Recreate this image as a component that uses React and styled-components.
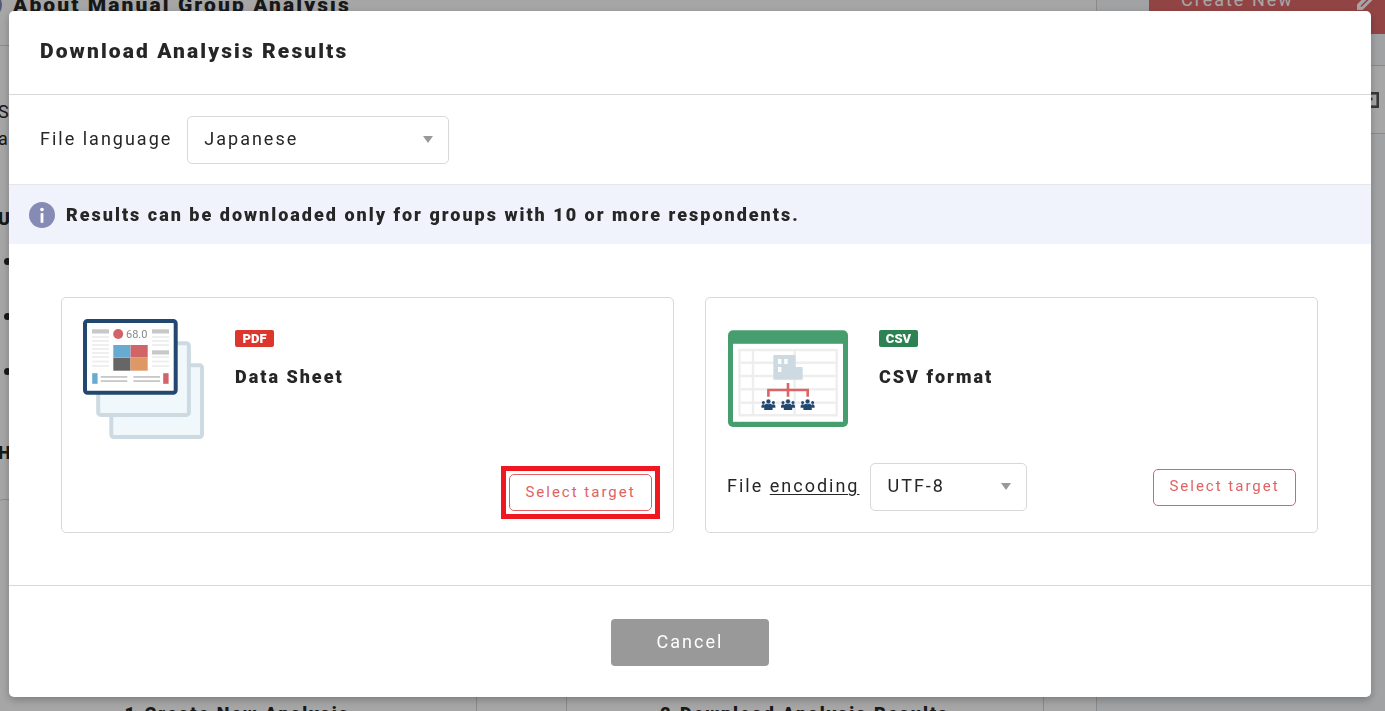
import React, { useState } from "react";
import styled, { createGlobalStyle } from "styled-components";

const GlobalStyle = createGlobalStyle`
  * {
    box-sizing: border-box;
  }

  body {
    margin: 0;
    overflow: hidden;
    color: #262626;
    background: #f7f9fc;
    font-family: Roboto, "Liberation Sans", sans-serif;
    font-size: 18px;
    letter-spacing: 2px;
  }

  h1, h2, h3, p, ul {
    margin: 0;
    padding: 0;
  }

  button, select {
    font-family: inherit;
    letter-spacing: inherit;
  }
`;

const Page = styled.div`
  display: flex;
  height: 100vh;
  overflow: hidden;
`;

const Main = styled.main`
  flex: 1;
  min-width: 0;
  background: #fff;
  border-right: 1px solid #d5d5d5;
`;

const PageHeading = styled.div`
  display: flex;
  align-items: flex-start;
  gap: 11px;
  height: 46px;
  margin-left: -24px;
  border-bottom: 1px solid #d5d5d5;

  svg {
    margin-top: -8px;
  }

  h1 {
    font-size: 21px;
    font-weight: 900;
    letter-spacing: 0.1em;
    line-height: 10px;
    white-space: nowrap;
  }
`;

const Article = styled.div`
  padding-top: 52px;
  margin-left: -2px;
  line-height: 27px;

  h2 {
    font-size: 18px;
    font-weight: 900;
    line-height: 27px;
  }

  p + h2 {
    margin-top: 53px;
  }

  ul {
    list-style: none;
    margin: 16px 0 26px;
  }

  li {
    height: 55px;
    padding-left: 6px;
    display: flex;
    align-items: flex-start;
  }

  li::before {
    content: "";
    width: 7px;
    height: 7px;
    margin-top: 10px;
    border-radius: 50%;
    background: #262626;
  }
`;

const Steps = styled.div`
  display: grid;
  grid-template-columns: 1fr 1fr;
  gap: 89px;
  margin-top: 33px;
  padding-right: 52px;
`;

const Step = styled.section`
  height: 400px;
  padding-top: 200px;
  border: 1px solid #d5d5d5;
  border-radius: 5px;
  text-align: center;

  h3 {
    font-size: 18px;
    font-weight: 900;
    line-height: 27px;
  }
`;

const Side = styled.aside`
  width: 288px;
`;

const CreateButton = styled.button`
  display: flex;
  justify-content: space-between;
  width: 236px;
  height: 34px;
  margin-left: 52px;
  padding: 0 9px 0 32px;
  border: 0;
  color: #fff;
  background: #e0696a;
  font-size: 18px;
  line-height: 0;

  svg {
    margin-top: -8px;
  }
`;

const SidePanel = styled.div`
  display: flex;
  align-items: center;
  justify-content: flex-end;
  height: 69px;
  margin-top: 31px;
  padding-right: 6px;
  background: #fff;
  border: solid #d5d5d5;
  border-width: 1px 0;
`;

const Overlay = styled.div`
  position: fixed;
  inset: 0;
  padding: 11px 14px 13px 9px;
  background: rgba(0, 0, 0, 0.35);
`;

const Modal = styled.div`
  background: #fff;
  border-radius: 5px;
  box-shadow: 0 3px 8px rgba(0, 0, 0, 0.25);
`;

const ModalHeader = styled.header`
  padding: 25px 31px 28px;
  border-bottom: 1px solid #d8d8d8;

  h2 {
    font-size: 21px;
    font-weight: 900;
    letter-spacing: 0.1em;
    line-height: 30px;
  }
`;

const LanguageRow = styled.div`
  display: flex;
  align-items: center;
  gap: 15px;
  padding: 21px 31px 20px;
`;

const Label = styled.label`
  line-height: 27px;
  padding-bottom: 4px;

  u {
    text-underline-offset: 2px;
    text-decoration-thickness: 1px;
  }
`;

const SelectBox = styled.div`
  position: relative;
  width: ${(props) => props.$width};

  &::after {
    content: "";
    position: absolute;
    top: 20px;
    right: 16px;
    border: solid transparent;
    border-width: 7px 5px 0;
    border-top-color: #999;
    pointer-events: none;
  }

  select {
    display: block;
    appearance: none;
    width: 100%;
    height: 48px;
    padding: 0 30px 4px 16px;
    color: #262626;
    background: #fff;
    border: 1px solid #d8d8d8;
    border-radius: 5px;
    font-size: 18px;
  }
`;

const Notice = styled.div`
  display: flex;
  align-items: center;
  gap: 11px;
  height: 60px;
  padding: 0 20px;
  background: #f0f3fb;
  border-top: 1px solid #e6e6ea;
  font-weight: 900;

  svg {
    flex: none;
  }
`;

const Cards = styled.div`
  display: grid;
  grid-template-columns: 1fr 1fr;
  gap: 31px;
  padding: 53px 53px 52px 52px;
`;

const Card = styled.section`
  display: flex;
  flex-direction: column;
  justify-content: space-between;
  height: 236px;
  padding: 21px;
  border: 1px solid #d8d8d8;
  border-radius: 5px;
`;

const CardTop = styled.div`
  display: flex;
  gap: 32px;

  > svg {
    flex: none;
    overflow: visible;
  }

  h3 {
    margin-top: 16px;
    font-size: 18px;
    font-weight: 900;
    line-height: 27px;
  }
`;

const Badge = styled.span`
  display: block;
  width: 39px;
  margin-top: 11px;
  border-radius: 2px;
  color: #fff;
  background: ${(props) => props.$color};
  font-size: 13px;
  font-weight: 900;
  letter-spacing: 0;
  line-height: 17px;
  text-align: center;
`;

const CardBottom = styled.div`
  display: flex;
  align-items: center;
  gap: 11px;
`;

const TargetButton = styled.button`
  width: 143px;
  height: 37px;
  margin-left: auto;
  padding: 0 0 2px;
  color: #e06263;
  background: #fff;
  border: 1px solid #e06263;
  border-radius: 5px;
  font-size: 15px;
`;

/* marks the button the reader has to press */
const Highlight = styled.div`
  position: relative;
  margin-left: auto;

  &::after {
    content: "";
    position: absolute;
    inset: -8px;
    border: 5px solid #f01820;
    pointer-events: none;
  }
`;

const ModalFooter = styled.footer`
  display: flex;
  justify-content: center;
  padding: 33px 0 31px;
  border-top: 1px solid #d8d8d8;
`;

const CancelButton = styled.button`
  width: 158px;
  height: 47px;
  padding: 0 0 2px;
  color: #fff;
  background: #999;
  border: 0;
  border-radius: 4px;
  font-size: 18px;
`;

function InfoIcon() {
  return (
    <svg width="26" height="26" viewBox="0 0 26 26" aria-hidden="true">
      <circle cx="13" cy="13" r="13" fill="#868bb5" />
      <circle cx="13" cy="7.6" r="1.8" fill="#fff" />
      <rect x="11.6" y="11.2" width="2.8" height="9.6" fill="#fff" />
    </svg>
  );
}

function PencilIcon() {
  return (
    <svg width="20" height="20" viewBox="0 0 20 20" fill="#fff" aria-hidden="true">
      <path d="M1 18V12.5L12.5 1L18 6.5L6.5 18Z" />
      <path d="M5 14.5L14 5.5" stroke="#e0696a" strokeWidth="1.6" />
    </svg>
  );
}

function WindowIcon() {
  return (
    <svg width="20" height="16" viewBox="0 0 20 16" fill="none" stroke="#555" strokeWidth="2.6" aria-hidden="true">
      <rect x="1.3" y="1.3" width="17.4" height="13.4" />
      <path d="M10 7H13.5" />
    </svg>
  );
}

function DataSheetIcon() {
  const left = [18, 22, 26, 30, 34, 38, 42.5, 47];
  const right = [18, 22, 26, 38, 42.5, 47];

  return (
    <svg width="120" height="120" viewBox="0 0 120 120" aria-hidden="true">
      <g fill="#f0f8fc" stroke="#cddae1" strokeWidth="4">
        <rect x="28.3" y="46.3" width="90.7" height="71.7" rx="2.5" />
        <rect x="15.2" y="24.2" width="90.7" height="71.7" rx="2.5" />
        <rect x="2" y="2" width="90.7" height="71.7" rx="2.5" fill="#fff" stroke="#23486f" />
      </g>
      <g stroke="#eee" strokeWidth="1.8">
        {left.map((y) => (
          <path key={y} d={`M9 ${y}H26`} />
        ))}
        {right.map((y) => (
          <path key={y} d={`M69 ${y}H86`} />
        ))}
      </g>
      <g fill="#c8c8c8">
        <rect x="9" y="10.3" width="17" height="4.2" />
        <rect x="69" y="10.3" width="17" height="4.2" />
        <rect x="69" y="31.3" width="17" height="4.2" />
        <rect x="17.7" y="57" width="26.6" height="1.8" />
        <rect x="17.7" y="61.2" width="26.6" height="1.8" />
        <rect x="50.4" y="57" width="26.6" height="1.8" />
        <rect x="50.4" y="61.2" width="26.6" height="1.8" />
      </g>
      <circle cx="35.2" cy="15" r="5" fill="#d16466" />
      <text x="43" y="19" fill="#888" fontSize="11" letterSpacing="0">68.0</text>
      <rect x="30.3" y="26" width="17.2" height="12.6" fill="#69abd0" />
      <rect x="47.6" y="26" width="17.1" height="12.6" fill="#d16466" />
      <rect x="30.3" y="38.8" width="17.2" height="12.9" fill="#666" />
      <rect x="47.6" y="38.8" width="17.1" height="12.9" fill="#de9866" />
      <rect x="9.2" y="54.2" width="5.4" height="10.6" fill="#69abd0" />
      <rect x="80.2" y="54.2" width="5.4" height="10.6" fill="#d16466" />
    </svg>
  );
}

function CsvIcon() {
  return (
    <svg width="120" height="120" viewBox="0 0 120 120" aria-hidden="true">
      <rect x="1" y="11.3" width="120" height="96.7" rx="5" fill="#469e6e" />
      <rect x="6" y="24.8" width="110" height="78" fill="#fff" />
      <path
        d="M12.5 31H109.7V96.3H12.5ZM12.5 43.8H109.7M12.5 57H109.7M12.5 70.2H109.7M12.5 83.8H109.7M26 31V96.3M67.6 31V96.3"
        fill="none"
        stroke="#eee"
        strokeWidth="2.4"
      />
      <path d="M47.3 36H67.7Q68.7 36 68.7 37V48H74.7Q75.7 48 75.7 49V60.8H47.3Q46.3 60.8 46.3 59.8V37Q46.3 36 47.3 36Z" fill="#cddae1" />
      <path d="M51 40H54.4V45H51ZM57.2 40H60.6V45H57.2ZM51 48H54.4V53H51Z" fill="#fff" />
      <path d="M61 64V77.7M41.4 77.7V71H80.7V77.7" fill="none" stroke="#dc6466" strokeWidth="2.6" />
      {[41.4, 61, 80.6].map((x) => (
        <g key={x} transform={`translate(${x} 80)`} fill="#23486f">
          <circle cx="-5" cy="3.4" r="1.5" />
          <circle cx="5" cy="3.4" r="1.5" />
          <path d="M-7 8.8V7Q-7 5.2 -5 5.2Q-3.8 5.2 -3.6 6.2V8.8ZM7 8.8V7Q7 5.2 5 5.2Q3.8 5.2 3.6 6.2V8.8Z" />
          <path d="M-4.2 11V7.6Q-4.2 4.4 0 4.4Q4.2 4.4 4.2 7.6V11Z" />
          <circle cy="2.5" r="2.4" stroke="#fff" strokeWidth="0.5" />
        </g>
      ))}
    </svg>
  );
}

export default function App() {
  const [language, setLanguage] = useState("Japanese");
  const [encoding, setEncoding] = useState("UTF-8");

  return (
    <>
      <GlobalStyle />
      <Page>
        <Main>
          <PageHeading>
            <InfoIcon />
            <h1>About Manual Group Analysis</h1>
          </PageHeading>
          <Article>
            <p>S<br />a</p>
            <h2>U</h2>
            <ul>
              <li />
              <li />
              <li />
            </ul>
            <h2>H</h2>
            <Steps>
              <Step>
                <h3>1.Create New Analysis</h3>
              </Step>
              <Step>
                <h3>2.Download Analysis Results</h3>
              </Step>
            </Steps>
          </Article>
        </Main>
        <Side>
          <CreateButton>
            Create New
            <PencilIcon />
          </CreateButton>
          <SidePanel>
            <WindowIcon />
          </SidePanel>
        </Side>
      </Page>
      <Overlay>
        <Modal role="dialog" aria-labelledby="modal-title">
          <ModalHeader>
            <h2 id="modal-title">Download Analysis Results</h2>
          </ModalHeader>
          <LanguageRow>
            <Label htmlFor="language">File language</Label>
            <SelectBox $width="262px">
              <select id="language" value={language} onChange={(e) => setLanguage(e.target.value)}>
                <option>Japanese</option>
              </select>
            </SelectBox>
          </LanguageRow>
          <Notice>
            <InfoIcon />
            <p>Results can be downloaded only for groups with 10 or more respondents.</p>
          </Notice>
          <Cards>
            <Card>
              <CardTop>
                <DataSheetIcon />
                <div>
                  <Badge $color="#dc372d">PDF</Badge>
                  <h3>Data Sheet</h3>
                </div>
              </CardTop>
              <CardBottom>
                <Highlight>
                  <TargetButton>Select target</TargetButton>
                </Highlight>
              </CardBottom>
            </Card>
            <Card>
              <CardTop>
                <CsvIcon />
                <div>
                  <Badge $color="#2d8253">CSV</Badge>
                  <h3>CSV format</h3>
                </div>
              </CardTop>
              <CardBottom>
                <Label htmlFor="encoding">
                  File <u>encoding</u>
                </Label>
                <SelectBox $width="157px">
                  <select id="encoding" value={encoding} onChange={(e) => setEncoding(e.target.value)}>
                    <option>UTF-8</option>
                  </select>
                </SelectBox>
                <TargetButton>Select target</TargetButton>
              </CardBottom>
            </Card>
          </Cards>
          <ModalFooter>
            <CancelButton>Cancel</CancelButton>
          </ModalFooter>
        </Modal>
      </Overlay>
    </>
  );
}
